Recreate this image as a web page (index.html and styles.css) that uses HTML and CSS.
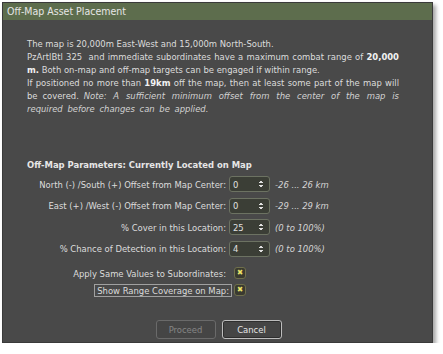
FILE: index.html
```html
<!DOCTYPE html>
<html lang="en">
  <head>
    <meta charset="UTF-8" />
    <title>Off-Map Asset Placement</title>
    <link rel="stylesheet" href="styles.css">
  </head>
  <body>
    <div class="dialog">
      <div class="titlebar">Off-Map Asset Placement</div>
      <div class="content">
        <p class="info">
          The map is 20,000m East-West and 15,000m North-South.<br />
          PzArtlBtl 325&nbsp; and immediate subordinates have a maximum combat range of <b>20,000 m.</b> Both on-map and off-map targets can be engaged if within range.<br />
          If positioned no more than <b>19km</b> off the map, then at least some part of the map will be covered. <i>Note: A sufficient minimum offset from the center of the map is required before changes can be applied.</i>
        </p>

        <h4 class="params-title">Off-Map Parameters: Currently Located on Map</h4>
        <div class="params">
          <label>North (-) /South (+) Offset from Map Center:</label>
          <div class="spin"><span>0</span><i class="arrows"></i></div>
          <em class="hint">-26 ... 26 km</em>

          <label>East (+) /West (-) Offset from Map Center:</label>
          <div class="spin"><span>0</span><i class="arrows"></i></div>
          <em class="hint">-29 ... 29 km</em>

          <label>% Cover in this Location:</label>
          <div class="spin"><span>25</span><i class="arrows"></i></div>
          <em class="hint">(0 to 100%)</em>

          <label>% Chance of Detection in this Location:</label>
          <div class="spin"><span>4</span><i class="arrows"></i></div>
          <em class="hint">(0 to 100%)</em>
        </div>

        <div class="checks">
          <label>Apply Same Values to Subordinates:</label>
          <span class="check">&#x2716;</span>

          <label class="focused">Show Range Coverage on Map:</label>
          <span class="check">&#x2716;</span>
        </div>

        <div class="buttons">
          <button class="btn" disabled>Proceed</button>
          <button class="btn">Cancel</button>
        </div>
      </div>
    </div>
  </body>
</html>
```

FILE: styles.css
```css
body {
  margin: 0;
  background-color: #ffffff;
  font-family: "DejaVu Sans Condensed", "DejaVu Sans", sans-serif;
  font-size: 9.4px;
  color: #dcdcdc;
}
.dialog {
  margin: 2px 0 0 2px;
  width: 431px;
  height: 341px;
  background-color: #494949;
  border: 1px solid #3a3a3a;
  box-sizing: border-box;
  box-shadow: 3px 3px 4px rgba(0, 0, 0, 0.35);
  display: flex;
  flex-direction: column;
}
.titlebar {
  height: 17px;
  line-height: 17px;
  padding-left: 4px;
  background-color: #5d6d4d;
  color: #e6e6e6;
  font-size: 10.5px;
}
.content {
  padding: 17px 33px 0 24px;
  display: flex;
  flex-direction: column;
}
.info {
  margin: 0;
  line-height: 13px;
  text-align: justify;
}
.info b {
  color: #f2f2f2;
}
.info i {
  color: #d2d2d2;
  word-spacing: 2px;
}
.params-title {
  margin: 44px 0 5px 0;
  font-size: 9.4px;
  line-height: 12px;
  color: #e6e6e6;
}
.params {
  display: grid;
  grid-template-columns: 202px 41px auto;
  grid-auto-rows: 16px;
  row-gap: 5.5px;
  align-items: center;
}
.params label {
  justify-self: end;
  padding-right: 3px;
  white-space: nowrap;
}
.spin {
  height: 16px;
  box-sizing: border-box;
  background-color: #3b3e36;
  border: 1px solid #6c7262;
  border-radius: 3px;
  display: flex;
  align-items: center;
  padding-left: 3px;
  position: relative;
  color: #e0e0e0;
}
.arrows {
  position: absolute;
  right: 6px;
  top: 3px;
  width: 4px;
  height: 8px;
  background:
    linear-gradient(to bottom right, transparent 50%, #e0e0e0 50%) left top / 2px 3px no-repeat,
    linear-gradient(to bottom left, transparent 50%, #e0e0e0 50%) right top / 2px 3px no-repeat,
    linear-gradient(to top right, transparent 50%, #e0e0e0 50%) left bottom / 2px 3px no-repeat,
    linear-gradient(to top left, transparent 50%, #e0e0e0 50%) right bottom / 2px 3px no-repeat;
}
.hint {
  margin-left: 5px;
  color: #d6d6d6;
  white-space: nowrap;
}
.checks {
  margin-top: 10px;
  display: grid;
  grid-template-columns: 202px auto;
  grid-auto-rows: 13px;
  row-gap: 4px;
  align-items: center;
}
.checks label {
  justify-self: end;
  padding-right: 3px;
  white-space: nowrap;
}
.checks .focused {
  border: 1px solid #a0a0a0;
  padding: 0 2px;
  margin-right: -3px;
  line-height: 11px;
}
.check {
  justify-self: start;
  width: 10px;
  height: 10px;
  margin-left: 5px;
  background-color: #3a3a30;
  border: 1px solid #6f6f4c;
  border-radius: 3px;
  color: #ece46a;
  font-size: 8px;
  line-height: 10px;
  text-align: center;
}
.buttons {
  margin-top: 23px;
  display: flex;
  justify-content: center;
  gap: 6px;
  padding-left: 11px;
}
.btn {
  width: 60px;
  height: 19px;
  background-color: #454545;
  border: 1px solid #bdbdbd;
  border-radius: 3px;
  box-shadow: inset 0 0 0 1px #2e2e2e;
  color: #e6e6e6;
  font-family: "DejaVu Sans Condensed", "DejaVu Sans", sans-serif;
  font-size: 9.4px;
}
.btn:disabled {
  border-color: #6a6a6a;
  box-shadow: none;
  color: #858585;
}
```
